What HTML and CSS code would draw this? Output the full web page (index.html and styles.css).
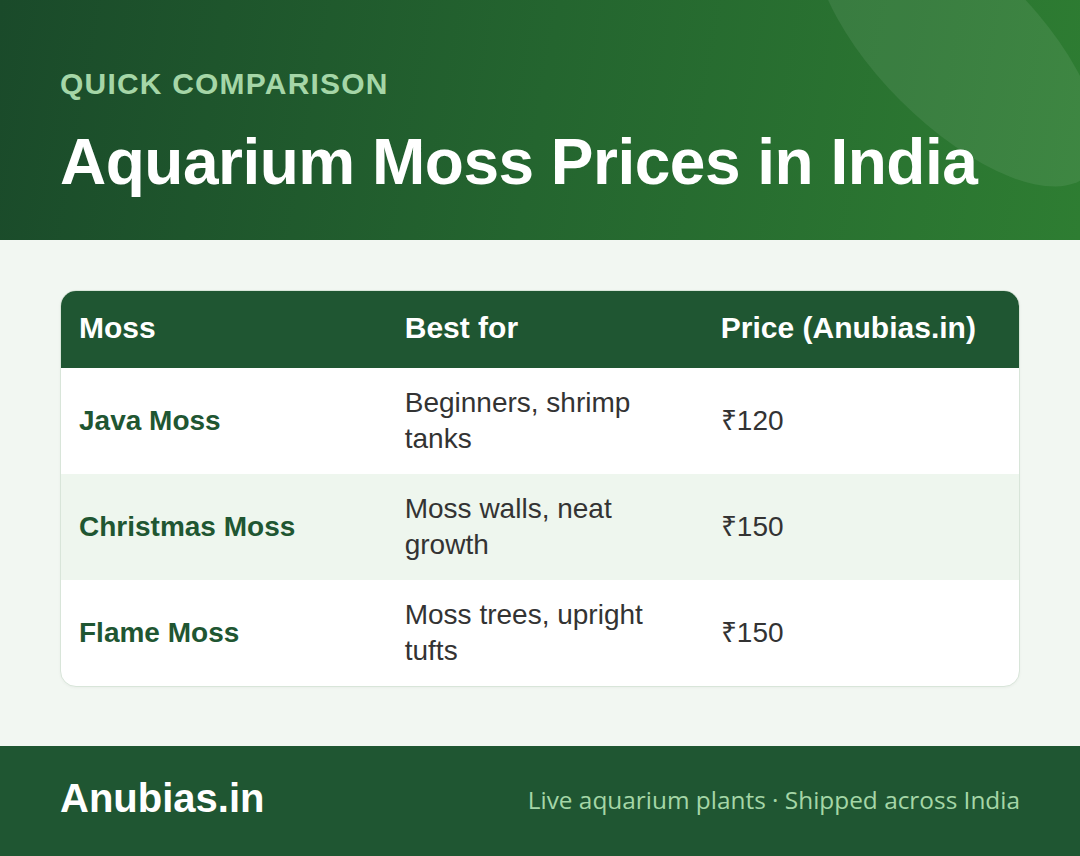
FILE: index.html
```html
<!DOCTYPE html>
<html lang="en">
<head>
<meta charset="utf-8">
<title>Aquarium Moss Prices in India</title>
<link rel="stylesheet" href="styles.css">
</head>
<body>
<div class="page">
  <header class="hero">
    <div class="hero-shape"></div>
    <div class="hero-label">QUICK COMPARISON</div>
    <h1 class="hero-title">Aquarium Moss Prices in India</h1>
  </header>
  <main class="content">
    <div class="card">
      <table class="price-table">
        <colgroup>
          <col class="col-name">
          <col class="col-best">
          <col class="col-price">
        </colgroup>
        <thead>
          <tr>
            <th>Moss</th>
            <th>Best for</th>
            <th>Price (Anubias.in)</th>
          </tr>
        </thead>
        <tbody>
          <tr>
            <td class="name">Java Moss</td>
            <td>Beginners, shrimp tanks</td>
            <td class="price">₹120</td>
          </tr>
          <tr class="alt">
            <td class="name">Christmas Moss</td>
            <td>Moss walls, neat growth</td>
            <td class="price">₹150</td>
          </tr>
          <tr>
            <td class="name">Flame Moss</td>
            <td>Moss trees, upright tufts</td>
            <td class="price">₹150</td>
          </tr>
        </tbody>
      </table>
    </div>
  </main>
  <footer class="footer">
    <div class="brand">Anubias.in</div>
    <div class="tagline">Live aquarium plants · Shipped across India</div>
  </footer>
</div>
</body>
</html>
```

FILE: styles.css
```css
* {
  box-sizing: border-box;
}

html, body {
  margin: 0;
  padding: 0;
}

body {
  font-family: "Liberation Sans", Arial, sans-serif;
  background: #f2f7f2;
}

.page {
  width: 1080px;
  height: 856px;
  display: flex;
  flex-direction: column;
}

.hero {
  position: relative;
  overflow: hidden;
  height: 240px;
  flex: none;
  padding: 66px 60px 0;
  background: linear-gradient(100deg, #1a4a2a 0%, #24652f 50%, #2e7d32 100%);
}

.hero-shape {
  position: absolute;
  left: 772px;
  top: -36px;
  width: 370px;
  height: 160px;
  border-radius: 50%;
  background: rgba(255, 255, 255, 0.08);
  transform: rotate(45deg);
}

.hero-label {
  position: relative;
  font-size: 30px;
  line-height: 36px;
  font-weight: 700;
  letter-spacing: 1.2px;
  color: #a5d6a7;
  margin-bottom: 22px;
}

.hero-title {
  position: relative;
  margin: 0;
  font-size: 64px;
  line-height: 77px;
  font-weight: 700;
  letter-spacing: -0.5px;
  color: #ffffff;
}

.content {
  flex: 1;
  padding: 50px 60px 0;
}

.card {
  background: #ffffff;
  border: 1px solid #d8e5d9;
  border-radius: 16px;
  overflow: hidden;
  box-shadow: 0 1px 3px rgba(0, 0, 0, 0.04);
}

.price-table {
  width: 100%;
  border-collapse: collapse;
  table-layout: fixed;
}

.col-name {
  width: 34%;
}

.col-best,
.col-price {
  width: 33%;
}

.price-table th {
  background: #1f5632;
  color: #ffffff;
  font-size: 30px;
  line-height: 33px;
  font-weight: 700;
  text-align: left;
  padding: 20px 18px 24px;
}

.price-table td {
  font-size: 28px;
  line-height: 36px;
  color: #333333;
  padding: 17px 18px;
  vertical-align: middle;
}

.price-table tr.alt td {
  background: #eef6ee;
}

.price-table td.name {
  font-weight: 700;
  color: #1f5632;
}

.footer {
  flex: none;
  height: 110px;
  background: #1f5632;
  padding: 0 60px 6px;
  display: flex;
  align-items: center;
  justify-content: space-between;
}

.brand {
  font-size: 40px;
  line-height: 44px;
  font-weight: 700;
  color: #ffffff;
}

.tagline {
  font-family: "Open Sans", "Noto Sans", sans-serif;
  font-size: 24.4px;
  line-height: 30px;
  margin-top: 4px;
  color: #a5d6a7;
}
```
